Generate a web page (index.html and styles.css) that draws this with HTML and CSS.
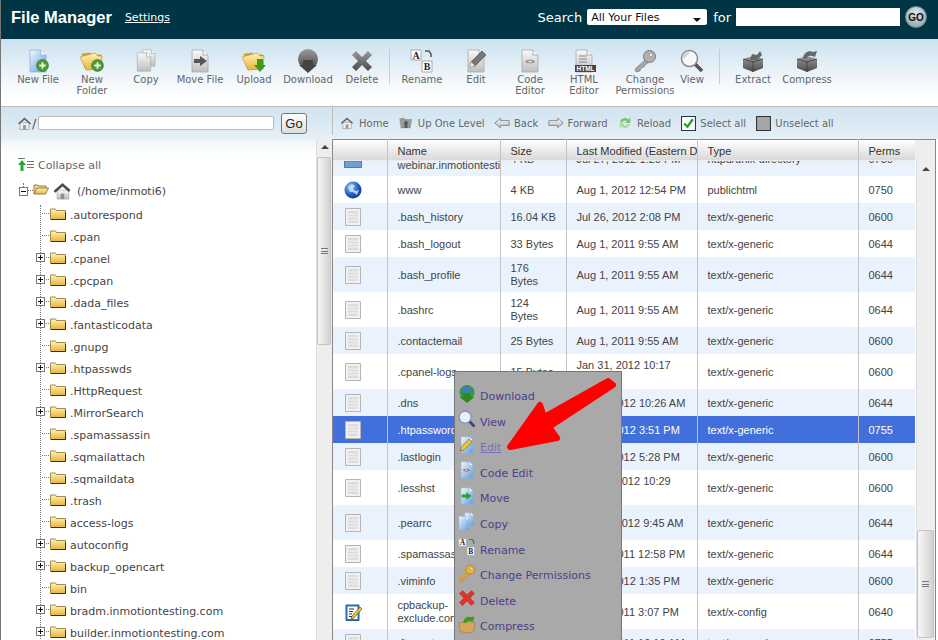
FILE: index.html
```html
<!DOCTYPE html>
<html lang="en">
<head>
  <meta charset="UTF-8" />
  <title>File Manager</title>
  <link rel="stylesheet" href="styles.css">
</head>
<body>

<!-- shared icons -->
<svg class="sprites" xmlns="http://www.w3.org/2000/svg">
  <defs>
    <linearGradient id="gBlue" x1="0" y1="0" x2="1" y2="1"><stop offset="0" stop-color="#f4f9fe"/><stop offset="1" stop-color="#5b9ddc"/></linearGradient>
    <linearGradient id="gGray" x1="0" y1="0" x2="0" y2="1"><stop offset="0" stop-color="#fafafa"/><stop offset="1" stop-color="#bdbdbd"/></linearGradient>
    <linearGradient id="gYellow" x1="0" y1="0" x2="0" y2="1"><stop offset="0" stop-color="#fff3b0"/><stop offset="1" stop-color="#e8b33c"/></linearGradient>
    <linearGradient id="gDark" x1="0" y1="0" x2="0" y2="1"><stop offset="0" stop-color="#9a9a9a"/><stop offset="1" stop-color="#4a4a4a"/></linearGradient>
    <radialGradient id="gGlobe" cx=".35" cy=".3" r=".8"><stop offset="0" stop-color="#8cc4f5"/><stop offset=".6" stop-color="#1c5fc0"/><stop offset="1" stop-color="#0c2f80"/></radialGradient>

    <symbol id="docBlue" viewBox="0 0 24 24"><path d="M4 1h11l5 5v17H4z" fill="url(#gBlue)" stroke="#8db4d8" stroke-width=".8"/><path d="M15 1v5h5" fill="#fff" stroke="#8db4d8" stroke-width=".8"/></symbol>
    <symbol id="docGray" viewBox="0 0 24 24"><path d="M4 1h11l5 5v17H4z" fill="url(#gGray)" stroke="#aaa" stroke-width=".8"/><path d="M15 1v5h5" fill="#fff" stroke="#999" stroke-width=".8"/></symbol>
    <symbol id="badge" viewBox="0 0 24 24"><circle cx="12" cy="12" r="11" fill="#4f9a33" stroke="#2f6e1e"/><path d="M12 6v12M6 12h12" stroke="#e9f5e2" stroke-width="3.4"/></symbol>
    <symbol id="folderOpen" viewBox="0 0 24 24"><path d="M2 5l8-1 2 2 9 0v13H5z" fill="#d9a93a" stroke="#b58a2c" stroke-width=".6"/><path d="M0 8l15-4 3 3 4 0-1 13-15 1z" fill="url(#gYellow)" stroke="#b58a2c" stroke-width=".6"/></symbol>
    <symbol id="folder" viewBox="0 0 16 12"><path d="M.5 2.500V1h5l1 1.500h9v9H.5z" fill="url(#gYellow)" stroke="#8a7032" stroke-width=".8"/><path d="M1 11.500h14.500V4" fill="none" stroke="#3a3018" stroke-width="1"/></symbol>
    <symbol id="folderTree" viewBox="0 0 16 12"><path d="M1 11V2h4l1 1h7v2" fill="#f0d98a" stroke="#7d6a35" stroke-width=".8"/><path d="M1 11l3-6h11.500l-3 6z" fill="url(#gYellow)" stroke="#7d6a35" stroke-width=".8"/></symbol>
    <symbol id="house" viewBox="0 0 20 20"><path d="M4 9h13v10H4z" fill="url(#gGray)" stroke="#999" stroke-width=".6"/><path d="M8 13h4v6H8z" fill="#8f8f8f"/><path d="M0 10L10 1l9 8-2 2-7-6-8 7z" fill="#4c4c4c"/></symbol>
    <symbol id="homeSmall" viewBox="0 0 20 20"><path d="M4 9h12v9H4z" fill="#f2f2f2" stroke="#888" stroke-width=".8"/><path d="M8 12h4v6H8z" fill="#999"/><path d="M1 10l9-8 9 8-2 1-7-6-7 6z" fill="#666"/></symbol>
    <symbol id="upFolder" viewBox="0 0 20 20"><path d="M1 4l6-1 2 2 9 0-2 12H3z" fill="#9c9c9c" stroke="#777" stroke-width=".6"/><path d="M10 6l4 5h-2v6H8v-6H6z" fill="#555"/></symbol>
    <symbol id="arrowLeft" viewBox="0 0 20 14"><path d="M1 7l7-6v3h11v6H8v3z" fill="url(#gGray)" stroke="#777"/></symbol>
    <symbol id="arrowRight" viewBox="0 0 20 14"><path d="M19 7l-7-6v3H1v6h11v3z" fill="url(#gGray)" stroke="#777"/></symbol>
    <symbol id="reload" viewBox="0 0 16 16"><path d="M2 7a6 6 0 0 1 10-3l2-2v6H8l2-2a3.500 3.500 0 0 0-5 1z" fill="#7cc36b"/><path d="M14 9a6 6 0 0 1-10 3l-2 2V8h6l-2 2a3.500 3.500 0 0 0 5-1z" fill="#a9d99a"/></symbol>
    <symbol id="checkOn" viewBox="0 0 14 14"><path d="M.5.500h13v13H.5z" fill="#fff" stroke="#1f3b4a"/><path d="M3 7l3 3 5-7" fill="none" stroke="#27a327" stroke-width="2.200"/></symbol>
    <symbol id="checkOff" viewBox="0 0 14 14"><path d="M.5.500h13v13H.5z" fill="#a5a5a5" stroke="#333"/></symbol>
    <symbol id="collapse" viewBox="0 0 16 14"><path d="M0 .500h7M9 3.500h7M9 6.500h7M9 9.500h7" stroke="#777"/><path d="M4 2l4 5H5.500v6h-3V7H0z" fill="#2fa52f"/></symbol>
    <symbol id="globeBlue" viewBox="0 0 18 18"><circle cx="9" cy="9" r="8.500" fill="url(#gGlobe)"/><path d="M4 6l4-3 3 2-2 3 3 2 3-1-2 5-4-3-3 0z" fill="#d7e9fb" opacity=".8"/></symbol>
    <symbol id="txt" viewBox="0 0 18 18"><path d="M1.500.500h15v17h-15z" fill="#f1f1f1" stroke="#b5b5b5"/><path d="M4 3h10v12H4z" fill="#dcdcdc"/><path d="M4 6h10M4 9h10M4 12h10" stroke="#f5f5f5"/></symbol>
    <symbol id="conf" viewBox="0 0 18 18"><path d="M2 2h13v15.500H2z" fill="#2f7fc9" stroke="#1d5f9d"/><path d="M3.500 3.500h10v12.500h-10z" fill="#fff"/><path d="M5 6h5M5 8.500h4M5 11h3M5 13.500h6" stroke="#333"/><path d="M8 13l8-9 2 2-8 9-3 1z" fill="#f2c230" stroke="#222" stroke-width=".5"/></symbol>
    <symbol id="folderBlue" viewBox="0 0 18 8"><path d="M.5 0h17v6.500H.5z" fill="#6f9fd6" stroke="#4d7cb5"/></symbol>
    <symbol id="pencil" viewBox="0 0 24 24"><path d="M6 18l1-5L18 2l4 4-11 11z" fill="#777" stroke="#444" stroke-width=".6"/><path d="M6 18l1-5 4 4z" fill="#eee"/></symbol>
    <symbol id="magnifier" viewBox="0 0 24 24"><path d="M15 15l7 7" stroke="#555" stroke-width="3.500"/><circle cx="9.500" cy="9.500" r="8" fill="#f7f7f7" stroke="#8a8a8a" stroke-width="1.500"/><path d="M4 9a6 6 0 0 1 5-5" fill="none" stroke="#ccc" stroke-width="2"/></symbol>
    <symbol id="magnifierBlue" viewBox="0 0 24 24"><path d="M15 15l7 7" stroke="#4a3a8c" stroke-width="3.500"/><circle cx="9.500" cy="9.500" r="8" fill="#e6f0fb" stroke="#7f8fb8" stroke-width="1.500"/></symbol>
    <symbol id="key" viewBox="0 0 24 24"><circle cx="16.500" cy="7.500" r="6" fill="#b0b0b0" stroke="#777"/><circle cx="18" cy="6" r="1.700" fill="#eee" stroke="#777" stroke-width=".5"/><path d="M12 11L2 20l1 3 4-1 1-3 3-1 1-2 3-2z" fill="#a5a5a5" stroke="#777" stroke-width=".6"/></symbol>
    <symbol id="keyGold" viewBox="0 0 24 24"><circle cx="16.500" cy="7.500" r="6" fill="#e8b33c" stroke="#a67a1e"/><circle cx="18" cy="6" r="1.700" fill="#eee" stroke="#777" stroke-width=".5"/><path d="M12 11L2 20l1 3 4-1 1-3 3-1 1-2 3-2z" fill="#e0a52e" stroke="#a67a1e" stroke-width=".6"/></symbol>
    <symbol id="box" viewBox="0 0 24 24"><path d="M2 10l10-3 10 3v9l-10 4-10-4z" fill="url(#gDark)"/><path d="M12 12v11M2 10l10 3 10-3" stroke="#333" stroke-width=".7" fill="none"/></symbol>
    <symbol id="rename" viewBox="0 0 24 24"><path d="M1 1h10v10H1z" fill="#fff" stroke="#aaa"/><path d="M12 12h10v11H12z" fill="#fff" stroke="#aaa"/><text x="6" y="9.500" class="svg-serif">A</text><text x="17" y="21" class="svg-serif">B</text></symbol>
  </defs>
</svg>

<div class="page">
  <header class="topbar">
    <h1>File Manager</h1>
    <a class="settings" href="#">Settings</a>
    <form class="search">
      <label>Search</label>
      <span class="select-wrap">
        <select><option>All Your Files</option></select>
      </span>
      <label>for</label>
      <input type="text">
      <button class="go-round" type="button">GO</button>
    </form>
  </header>

  <div class="toolbar">
    <a class="tool"><svg class="ti"><use href="#docBlue"/><use href="#badge" x="10" y="10" width="13" height="13"/></svg>New File</a>
    <a class="tool"><svg class="ti"><use href="#folderOpen"/><use href="#badge" x="11" y="10" width="13" height="13"/></svg>New Folder</a>
    <a class="tool"><svg class="ti"><use href="#docGray" x="6" width="18" height="18"/><use href="#docGray" x="0" y="3" width="20" height="20"/></svg>Copy</a>
    <a class="tool"><svg class="ti"><use href="#docGray"/><path d="M6 10h6V7l7 5-7 5v-3H6z" fill="#555"/></svg>Move File</a>
    <a class="tool"><svg class="ti"><use href="#folderOpen"/><path d="M15 10h6v6h3l-6 7-6-7h3z" fill="#3c9a1e"/></svg>Upload</a>
    <a class="tool"><svg class="ti"><circle cx="12" cy="10" r="10" fill="url(#gDark)"/><path d="M7 11h10v5h4l-9 8-9-8h4z" fill="#444"/></svg>Download</a>
    <a class="tool"><svg class="ti"><path d="M2 6l4-4 6 6 6-6 4 4-6 6 6 6-4 4-6-6-6 6-4-4 6-6z" fill="url(#gDark)"/></svg>Delete</a>
    <span class="tool-sep"></span>
    <a class="tool"><svg class="ti"><use href="#rename"/><path d="M15 2h4l2 3v3" fill="none" stroke="#555" stroke-width="1.500"/></svg>Rename</a>
    <a class="tool"><svg class="ti"><use href="#docGray"/><use href="#pencil"/></svg>Edit</a>
    <a class="tool"><svg class="ti"><use href="#docGray"/><text x="12" y="15" class="svg-code">&lt;&gt;</text></svg>Code Editor</a>
    <a class="tool"><svg class="ti"><use href="#docGray"/><path d="M7 7h8M7 10h8M7 13h8" stroke="#888"/><path d="M3 16h21v7H3z" fill="#444"/><text x="13.500" y="22" class="svg-html">HTML</text></svg>HTML Editor</a>
    <a class="tool wide"><svg class="ti"><use href="#key"/></svg>Change Permissions</a>
    <a class="tool narrow"><svg class="ti"><use href="#magnifier"/></svg>View</a>
    <span class="tool-sep sep-b"></span>
    <a class="tool"><svg class="ti"><use href="#box"/><path d="M9 11l2-6 5 1 3-4 2 4-5 5z" fill="#666"/></svg>Extract</a>
    <a class="tool"><svg class="ti"><use href="#box"/><path d="M8 9c1-6 6-8 10-6l4-1-2 6-3-1c-2-1-5 0-6 3z" fill="#666"/></svg>Compress</a>
  </div>

  <div class="addressbar">
    <div class="pathbox">
      <svg class="pi"><use href="#homeSmall"/></svg>
      <span class="slash">/</span>
      <input type="text">
      <button class="go" type="button">Go</button>
    </div>
    <nav class="filenav">
      <a><svg class="ni"><use href="#homeSmall"/></svg>Home</a>
      <a><svg class="ni"><use href="#upFolder"/></svg>Up One Level</a>
      <a><svg class="ni"><use href="#arrowLeft"/></svg>Back</a>
      <a><svg class="ni"><use href="#arrowRight"/></svg>Forward</a>
      <a><svg class="ni"><use href="#reload"/></svg>Reload</a>
      <a><svg class="ni ck"><use href="#checkOn"/></svg>Select all</a>
      <a><svg class="ni ck"><use href="#checkOff"/></svg>Unselect all</a>
    </nav>
  </div>

  <div class="panes">
    <aside class="treepane">
      <div class="tree-scroll">
        <a class="collapse"><svg class="ci"><use href="#collapse"/></svg>Collapse all</a>
        <div class="root">
          <span class="exp minus"></span>
          <svg class="rf"><use href="#folderTree"/></svg>
          <svg class="rh"><use href="#house"/></svg>
          <span>(/home/inmoti6)</span>
        </div>
        <ul class="tree">
          <li><svg><use href="#folder"/></svg>.autorespond</li>
          <li><svg><use href="#folder"/></svg>.cpan</li>
          <li class="has"><span class="exp"></span><svg><use href="#folder"/></svg>.cpanel</li>
          <li class="has"><span class="exp"></span><svg><use href="#folder"/></svg>.cpcpan</li>
          <li class="has"><span class="exp"></span><svg><use href="#folder"/></svg>.dada_files</li>
          <li class="has"><span class="exp"></span><svg><use href="#folder"/></svg>.fantasticodata</li>
          <li><svg><use href="#folder"/></svg>.gnupg</li>
          <li class="has"><span class="exp"></span><svg><use href="#folder"/></svg>.htpasswds</li>
          <li><svg><use href="#folder"/></svg>.HttpRequest</li>
          <li class="has"><span class="exp"></span><svg><use href="#folder"/></svg>.MirrorSearch</li>
          <li><svg><use href="#folder"/></svg>.spamassassin</li>
          <li><svg><use href="#folder"/></svg>.sqmailattach</li>
          <li><svg><use href="#folder"/></svg>.sqmaildata</li>
          <li><svg><use href="#folder"/></svg>.trash</li>
          <li><svg><use href="#folder"/></svg>access-logs</li>
          <li class="has"><span class="exp"></span><svg><use href="#folder"/></svg>autoconfig</li>
          <li class="has"><span class="exp"></span><svg><use href="#folder"/></svg>backup_opencart</li>
          <li><svg><use href="#folder"/></svg>bin</li>
          <li class="has"><span class="exp"></span><svg><use href="#folder"/></svg>bradm.inmotiontesting.com</li>
          <li class="has"><span class="exp"></span><svg><use href="#folder"/></svg>builder.inmotiontesting.com</li>
        </ul>
      </div>
      <div class="vscroll left-bar">
        <span class="sb-arrow"></span>
        <span class="sb-thumb"><i></i></span>
      </div>
    </aside>

    <main class="listpane">
      <div class="listing">
        <table class="files head">
          <colgroup><col class="c1"><col class="c2"><col class="c3"><col class="c4"><col class="c5"><col class="c6"></colgroup>
          <tr><th></th><th>Name</th><th>Size</th><th><span class="clip">Last Modified (Eastern Daylight Time)</span></th><th>Type</th><th>Perms</th></tr>
        </table>
        <div class="rows">
          <table class="files">
            <colgroup><col class="c1"><col class="c2"><col class="c3"><col class="c4"><col class="c5"><col class="c6"></colgroup>
            <tr class="alt"><td class="ic tail"><svg class="tiny"><use href="#folderBlue"/></svg></td><td class="nm"><br>webinar.inmotiontesting.com</td><td>4 KB</td><td>Jul 27, 2012 1:20 PM</td><td>httpd/unix-directory</td><td>0750</td></tr>
            <tr><td class="ic"><svg><use href="#globeBlue"/></svg></td><td>www</td><td>4 KB</td><td>Aug 1, 2012 12:54 PM</td><td>publichtml</td><td>0750</td></tr>
            <tr class="alt"><td class="ic"><svg><use href="#txt"/></svg></td><td>.bash_history</td><td>16.04 KB</td><td>Jul 26, 2012 2:08 PM</td><td>text/x-generic</td><td>0600</td></tr>
            <tr><td class="ic"><svg><use href="#txt"/></svg></td><td>.bash_logout</td><td>33 Bytes</td><td>Aug 1, 2011 9:55 AM</td><td>text/x-generic</td><td>0644</td></tr>
            <tr class="alt"><td class="ic"><svg><use href="#txt"/></svg></td><td>.bash_profile</td><td>176 Bytes</td><td>Aug 1, 2011 9:55 AM</td><td>text/x-generic</td><td>0644</td></tr>
            <tr><td class="ic"><svg><use href="#txt"/></svg></td><td>.bashrc</td><td>124 Bytes</td><td>Aug 1, 2011 9:55 AM</td><td>text/x-generic</td><td>0644</td></tr>
            <tr class="alt"><td class="ic"><svg><use href="#txt"/></svg></td><td>.contactemail</td><td>25 Bytes</td><td>Aug 1, 2011 9:55 AM</td><td>text/x-generic</td><td>0600</td></tr>
            <tr><td class="ic"><svg><use href="#txt"/></svg></td><td>.cpanel-logs</td><td>15 Bytes</td><td>Jan 31, 2012 10:17 AM</td><td>text/x-generic</td><td>0600</td></tr>
            <tr class="alt"><td class="ic"><svg><use href="#txt"/></svg></td><td>.dns</td><td>1 KB</td><td>Aug 1, 2012 10:26 AM</td><td>text/x-generic</td><td>0644</td></tr>
            <tr class="sel"><td class="ic"><svg><use href="#txt"/></svg></td><td>.htpasswords</td><td>1 KB</td><td>Aug 1, 2012 3:51 PM</td><td>text/x-generic</td><td>0755</td></tr>
            <tr class="alt"><td class="ic"><svg><use href="#txt"/></svg></td><td>.lastlogin</td><td>1 KB</td><td>Aug 1, 2012 5:28 PM</td><td>text/x-generic</td><td>0600</td></tr>
            <tr><td class="ic"><svg><use href="#txt"/></svg></td><td>.lesshst</td><td>35 Bytes</td><td>Jan 31, 2012 10:29 AM</td><td>text/x-generic</td><td>0600</td></tr>
            <tr class="alt"><td class="ic"><svg><use href="#txt"/></svg></td><td>.pearrc</td><td>160 Bytes</td><td>Jan 31, 2012 9:45 AM</td><td>text/x-generic</td><td>0644</td></tr>
            <tr><td class="ic"><svg><use href="#txt"/></svg></td><td>.spamassassin</td><td>1 KB</td><td>Aug 1, 2011 12:58 PM</td><td>text/x-generic</td><td>0644</td></tr>
            <tr class="alt"><td class="ic"><svg><use href="#txt"/></svg></td><td>.viminfo</td><td>1 KB</td><td>Aug 1, 2012 1:35 PM</td><td>text/x-generic</td><td>0600</td></tr>
            <tr><td class="ic"><svg><use href="#conf"/></svg></td><td>cpbackup-exclude.conf</td><td>1 KB</td><td>Aug 1, 2011 3:07 PM</td><td>text/x-config</td><td>0640</td></tr>
            <tr class="alt"><td class="ic"><svg><use href="#txt"/></svg></td><td>.ftpquota</td><td>1 KB</td><td>Aug 1, 2011 10:19 AM</td><td>text/x-generic</td><td>0755</td></tr>
          </table>
        </div>
      </div>
      <div class="rightcol">
        <div class="corner"></div>
        <div class="vscroll right-bar">
          <span class="sb-arrow"></span>
          <span class="sb-thumb"><i></i></span>
        </div>
      </div>
    </main>
  </div>
</div>

<!-- context menu -->
<ul class="ctxmenu">
  <li><svg viewBox="0 0 24 24"><circle cx="12" cy="10" r="10" fill="#2f9a3f"/><path d="M4 6l7-4 8 3-4 5-7 0z" fill="#3e78d0"/><path d="M7 11h10v5h5l-10 8-10-8h5z" fill="#2f8a1e"/></svg>Download</li>
  <li><svg viewBox="0 0 24 24"><use href="#magnifierBlue"/></svg>View</li>
  <li class="off"><svg viewBox="0 0 24 24"><use href="#docBlue"/><path d="M3 20l1-5 11-11 4 4-11 11z" fill="#f2c230" stroke="#333" stroke-width=".6"/></svg>Edit</li>
  <li><svg viewBox="0 0 24 24"><use href="#docBlue"/><text x="11.500" y="15" class="svg-code red">&lt;&gt;</text></svg>Code Edit</li>
  <li><svg viewBox="0 0 24 24"><use href="#docBlue"/><path d="M5 10h6V7l7 5-7 5v-3H5z" fill="#2aa32a"/></svg>Move</li>
  <li><svg viewBox="0 0 24 24"><use href="#docBlue" x="6" y="-1" width="18" height="18"/><use href="#docBlue" x="-2" y="3" width="20" height="21"/></svg>Copy</li>
  <li><svg viewBox="0 0 24 24"><use href="#rename"/><path d="M15 2h4l2 3v3" fill="none" stroke="#2f8a1e" stroke-width="1.500"/></svg>Rename</li>
  <li><svg viewBox="0 0 24 24"><use href="#keyGold"/></svg>Change Permissions</li>
  <li><svg viewBox="0 0 24 24"><path d="M2 6l4-4 6 6 6-6 4 4-6 6 6 6-4 4-6-6-6 6-4-4 6-6z" fill="#e0332c" stroke="#9c1f1a" stroke-width=".6"/></svg>Delete</li>
  <li><svg viewBox="0 0 24 24"><path d="M1 11l11-3 11 3-2 11-9 2-9-2z" fill="#d9a55a" stroke="#8a6530" stroke-width=".6"/><path d="M7 10c1-6 6-9 10-7l5-1-2 7-3-1c-3-1-5 0-6 3z" fill="#3c9a1e"/></svg>Compress</li>
</ul>

<svg class="arrow" viewBox="0 0 938 640">
  <path d="M608 381L613 385 549 427 557 438 510 447 540 405 544 417z" fill="#f00" stroke="#f00" stroke-width="6" stroke-linejoin="round"/>
</svg>

</body>
</html>
```

FILE: styles.css
```css
* {
  box-sizing: border-box;
}

html,
body {
  margin: 0;
  padding: 0;
  width: 938px;
  height: 640px;
  overflow: hidden;
  background: #fff;
}

body {
  position: relative;
  font-family: "DejaVu Sans", Verdana, sans-serif;
  font-size: 10px;
  color: #666;
}

.sprites {
  display: block;
  width: 0;
  height: 0;
}

.svg-serif {
  font-family: "Liberation Serif", serif;
  font-size: 10px;
  font-weight: bold;
  text-anchor: middle;
  fill: #222;
}

.svg-code {
  font-family: "Liberation Mono", monospace;
  font-size: 8px;
  font-weight: bold;
  text-anchor: middle;
  fill: #777;
}

.svg-code.red {
  fill: #d22;
}

.svg-html {
  font-family: "Liberation Sans", sans-serif;
  font-size: 6.5px;
  font-weight: bold;
  text-anchor: middle;
  fill: #fff;
}

.page {
  width: 938px;
  height: 640px;
  border-left: 1px solid #777;
  display: flex;
  flex-direction: column;
}

/* top bar */
.topbar {
  height: 39px;
  background: #003545;
  color: #fff;
  display: flex;
  align-items: center;
  padding: 0 11px 5px 10px;
}

.topbar h1 {
  margin: 0;
  font-family: "Liberation Sans", Arial, sans-serif;
  font-size: 16.5px;
  font-weight: bold;
}

.settings {
  margin-left: 13px;
  color: #fff;
  font-size: 11px;
  text-decoration: underline;
}

.search {
  margin: 0 0 0 auto;
  display: flex;
  align-items: center;
  font-size: 13px;
}

.select-wrap {
  position: relative;
  margin: 0 6px 0 5px;
}

.select-wrap::after {
  content: "";
  position: absolute;
  right: 6px;
  top: 9px;
  border: 4px solid transparent;
  border-top-color: #111;
  border-bottom: 0;
}

.select-wrap select {
  display: block;
  appearance: none;
  width: 120px;
  height: 16px;
  margin: 0;
  padding: 0 0 0 4px;
  border: 0;
  border-radius: 2px;
  background: #fff;
  color: #111;
  font-family: "DejaVu Sans", sans-serif;
  font-size: 11px;
}

.search input {
  width: 164px;
  height: 18px;
  margin: 0 5px;
  border: 0;
  background: #fff;
}

.go-round {
  width: 22px;
  height: 22px;
  padding: 0;
  border: 1px solid #6f8a92;
  border-radius: 50%;
  background: radial-gradient(circle at 50% 30%, #dfe9ec, #7f9ba3);
  color: #111;
  font-family: "Liberation Sans", sans-serif;
  font-size: 10px;
  font-weight: bold;
}

/* toolbar */
.toolbar {
  height: 68px;
  padding: 10px 0 0 10px;
  display: flex;
  align-items: flex-start;
  background: linear-gradient(#cbe1ef, #fff 85%);
  border-bottom: 1px solid #bbb;
}

.tool {
  width: 54px;
  line-height: 11px;
  text-align: center;
  color: #666;
}

.tool.wide {
  width: 68px;
}

.tool.narrow {
  width: 26px;
}

.ti {
  display: block;
  width: 24px;
  height: 24px;
  margin: 0 auto 1px;
  overflow: visible;
}

.tool.narrow .ti {
  margin-left: 1px;
}

.tool-sep {
  width: 1px;
  height: 35px;
  margin: 0 5px 0 0;
  background: #ccc;
}

.sep-b {
  margin: 0 6px 0 14px;
}

/* address row */
.addressbar {
  height: 32px;
  display: flex;
  background: linear-gradient(#cfe3f0, #e6f0f7);
}

.pathbox {
  width: 331px;
  padding: 0 0 0 16px;
  display: flex;
  align-items: center;
}

.pi {
  width: 15px;
  height: 15px;
}

.slash {
  width: 5px;
  font-size: 13px;
  color: #555;
}

.pathbox input {
  width: 236px;
  height: 14px;
  margin: 0 7px 0 1px;
  border: 1px solid #bbb;
  border-radius: 2px;
  background: #fff;
}

.go {
  width: 26px;
  height: 21px;
  padding: 0;
  border: 1px solid #777;
  border-radius: 3px;
  background: linear-gradient(#fff, #ddd);
  color: #222;
  font-family: "Liberation Sans", sans-serif;
  font-size: 13px;
}

.filenav {
  flex: 1;
  padding-left: 7px;
  display: flex;
  align-items: center;
  gap: 9.3px;
  color: #666;
  background: linear-gradient(#bbb, #bbb) left top / 1px 28px no-repeat;
}

.filenav a {
  display: flex;
  align-items: center;
  gap: 4px;
}

.ni {
  width: 16px;
  height: 14px;
}

.ni.ck {
  width: 15px;
  height: 15px;
  margin-left: 1px;
}

/* two panes */
.panes {
  flex: 1;
  min-height: 0;
  display: flex;
}

.treepane {
  width: 331px;
  display: flex;
}

.tree-scroll {
  width: 315px;
  overflow: hidden;
  background: linear-gradient(#edf5fa, #fff 16px);
  font-size: 11px;
  color: #444;
}

.collapse {
  display: flex;
  align-items: center;
  height: 14px;
  margin: 19px 0 0 17px;
  color: #666;
}

.ci {
  width: 16px;
  height: 14px;
  margin-right: 4px;
}

.root {
  position: relative;
  height: 22px;
  margin-top: 8px;
  padding-left: 32px;
  display: flex;
  align-items: center;
}

.root::before {
  content: "";
  position: absolute;
  left: 22px;
  top: 3px;
  height: 4px;
  border-left: 1px dotted #777;
}

.root::after {
  content: "";
  position: absolute;
  left: 26px;
  top: 10px;
  width: 6px;
  border-top: 1px dotted #777;
}

.rf {
  width: 16px;
  height: 12px;
  margin: -4px 4px 0 0;
}

.rh {
  width: 19px;
  height: 18px;
  margin-right: 5px;
}

.exp {
  position: absolute;
  width: 9px;
  height: 9px;
  border: 1px solid #777;
  background:
    linear-gradient(#111, #111) center / 5px 1px no-repeat,
    linear-gradient(#111, #111) center / 1px 5px no-repeat,
    #fff;
}

.exp.minus {
  left: 18px;
  top: 7px;
  background: linear-gradient(#111, #111) center / 5px 1px no-repeat, #fff;
}

.tree {
  list-style: none;
  margin: 3px 0 0 39px;
  padding: 0;
  border-left: 1px dotted #777;
}

.tree li {
  position: relative;
  height: 22px;
  padding-left: 29px;
  line-height: 22px;
  white-space: nowrap;
}

.tree li::before {
  content: "";
  position: absolute;
  left: 1px;
  top: 8px;
  width: 9px;
  border-top: 1px dotted #777;
}

.tree li svg {
  position: absolute;
  left: 9px;
  top: 3px;
  width: 16px;
  height: 12px;
}

.tree li .exp {
  left: -5px;
  top: 4px;
}

/* scrollbars */
.vscroll {
  position: relative;
  background: #eee;
  border-left: 1px solid #ddd;
}

.left-bar {
  width: 16px;
  margin-right: 0;
}

.sb-arrow {
  display: block;
  width: 0;
  margin: 6px auto 0;
  border: 4px solid transparent;
  border-bottom-color: #444;
  border-top: 0;
}

.sb-thumb {
  position: absolute;
  left: 0;
  right: 1px;
  top: 18px;
  height: 188px;
  display: flex;
  align-items: center;
  justify-content: center;
  border: 1px solid #c4c4c4;
  border-radius: 2px;
  background: linear-gradient(to right, #f7f7f7, #d2d2d2);
}

.sb-thumb i {
  width: 7px;
  height: 6px;
  border-top: 1px solid #777;
  border-bottom: 1px solid #777;
  background: linear-gradient(#777, #777) center / 100% 1px no-repeat;
}

.right-bar .sb-arrow {
  margin-top: 6px;
}

.right-bar .sb-thumb {
  top: 369px;
  height: 108px;
}

.listpane {
  width: 606px;
  display: flex;
  border-left: 1px solid #888;
  border-right: 1px solid #888;
  border-top: 0;
  margin-right: 2px;
}

.listing {
  width: 582px;
  display: flex;
  flex-direction: column;
}

.files {
  width: 582px;
  table-layout: fixed;
  border-collapse: collapse;
  font-family: "Liberation Sans", Arial, sans-serif;
  font-size: 11px;
  line-height: 13px;
  color: #444;
}

.c1 { width: 54px; }
.c2 { width: 113px; }
.c3 { width: 66px; }
.c4 { width: 131px; }
.c5 { width: 161px; }
.c6 { width: 57px; }

.files.head {
  position: relative;
  z-index: 1;
  height: 22px;
  border-top: 1px solid #888;
  background: linear-gradient(#fff, #d8d8d8);
  color: #333;
}

.files th {
  padding: 2px 0 0 10px;
  font-weight: normal;
  text-align: left;
  white-space: nowrap;
  overflow: hidden;
  border-left: 1px solid #c4c4c4;
}

.files th:first-child {
  border-left: 0;
}

.clip {
  display: block;
  overflow: hidden;
}

.rows {
  flex: 1;
  min-height: 0;
  margin-top: -20px;
  overflow: hidden;
}

.files td {
  padding: 5px 8px 4px 10px;
  border-left: 1px solid #c4c4c4;
  overflow: hidden;
}

.files td:first-child {
  border-left: 0;
}

.files td.ic {
  padding: 4.5px 0 4.5px 11px;
}

.files td.ic svg {
  display: block;
  width: 18px;
  height: 18px;
}

.files td.ic.tail {
  vertical-align: top;
  padding-top: 20px;
}

.files td.ic svg.tiny {
  height: 8px;
}

.nm {
  white-space: nowrap;
}

.alt td {
  background: #eaf3fd;
}

.sel td {
  background: #436fdc;
  color: #fff;
}

.rightcol {
  flex: 1;
  display: flex;
  flex-direction: column;
}

.corner {
  height: 22px;
  margin-left: 0;
  border-top: 1px solid #888;
  background: #eee;
}

.right-bar {
  flex: 1;
  margin-left: 1px;
}

/* right-click menu */
.ctxmenu {
  position: absolute;
  left: 454px;
  top: 371px;
  z-index: 2;
  width: 168px;
  height: 280px;
  margin: 0;
  padding: 12px 0 0 3px;
  list-style: none;
  background: #a9a9a9;
  border: 1px solid #777;
  font-size: 11px;
  color: #4b3f8a;
}

.ctxmenu li {
  height: 25.55px;
  display: flex;
  align-items: center;
  gap: 4px;
}

.ctxmenu li svg {
  width: 18px;
  height: 18px;
  margin-top: -6px;
  overflow: visible;
}

.ctxmenu li.off {
  color: #7a70b5;
  text-decoration: underline;
}

.arrow {
  position: absolute;
  left: 0;
  top: 0;
  z-index: 3;
  width: 938px;
  height: 640px;
  pointer-events: none;
}
```
